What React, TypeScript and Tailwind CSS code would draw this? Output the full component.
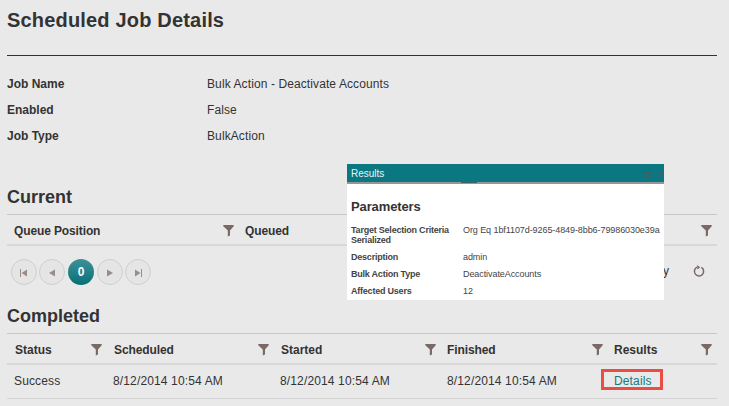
import type { ReactNode } from "react";

function Filter() {
  return (
    <svg className="mt-[3px] h-3 w-[11px] shrink-0" viewBox="0 0 11 12" fill="#7b6965">
      <path d="M0.3 0H10.7V1.3L7 5.5V10.6L4.8 11.6V5.5L0.3 1.3Z" />
    </svg>
  );
}

function Heading({ children }: { children: ReactNode }) {
  return <h2 className="text-[18px] font-bold leading-5">{children}</h2>;
}

function Column({ label, className }: { label?: string; className: string }) {
  return (
    <div className={`flex shrink-0 items-center justify-between ${className}`}>
      <span className="pt-[3px]">{label}</span>
      <Filter />
    </div>
  );
}

function PageButton({ children }: { children: ReactNode }) {
  return (
    <button className="flex size-[26px] items-center justify-center rounded-full border border-[#cfcfcf] bg-[#e5e5e5]">
      <svg className="mt-px size-3" viewBox="0 0 12 12" fill="#998c89">{children}</svg>
    </button>
  );
}

const details = [
  ["Job Name", "Bulk Action - Deactivate Accounts"],
  ["Enabled", "False"],
  ["Job Type", "BulkAction"],
];

function ResultsDialog() {
  return (
    <section className="absolute left-[347px] top-[164px] h-[136px] w-[317px] overflow-hidden bg-white text-[9px] tracking-[-0.08px] text-[#444]">
      <header className="flex h-[18px] items-center bg-[#0b7780] pl-1 text-[10px] tracking-normal text-[#e5f5f6]">
        <span className="w-[292px]">Results</span>
        <svg className="mt-0.5 h-[9px] w-[21px] shrink-0" viewBox="0 0 21 9" fill="none" stroke="#3d5f66">
          <rect x="0.5" y="1.5" width="7" height="5" rx="1" />
          <path d="M.5 2.5h7M15 1l6 6M21 1l-6 6" />
        </svg>
      </header>
      <div className="flex h-[2px] bg-[#969696] pl-[114px]">
        <div className="h-px w-4 bg-[#39666c]" />
      </div>
      <h3 className="mt-[15px] pl-1 text-[13px] font-bold leading-4 tracking-[-0.12px] text-[#333]">Parameters</h3>
      <dl className="mt-[10px] grid grid-cols-[112px_201px] grid-rows-[27px_17px_17px_17px] pl-1 leading-[10px] [&>dt]:whitespace-nowrap [&>dt]:font-bold [&>dt]:tracking-[-0.22px]">
        <dt>Target Selection Criteria<br />Serialized</dt>
        <dd className="whitespace-nowrap">Org Eq 1bf1107d-9265-4849-8bb6-79986030e39a</dd>
        <dt>Description</dt><dd>admin</dd>
        <dt>Bulk Action Type</dt><dd>DeactivateAccounts</dd>
        <dt>Affected Users</dt><dd>12</dd>
      </dl>
    </section>
  );
}

export default function App() {
  return (
    <main className="relative h-[406px] w-[729px] overflow-hidden bg-[#e9e9e9] pl-[7px] pr-3 font-['Liberation_Sans',Arial,sans-serif] text-[12px] text-[#333]">
      <h1 className="h-14 border-b border-[#333] pt-[9px] text-[20px] font-bold leading-[22px] tracking-[0.18px]">Scheduled Job Details</h1>
      <dl className="mt-[15px]">
        {details.map(([name, value]) => (
          <div key={name} className="flex h-[26px] items-center">
            <dt className="w-[200px] font-bold">{name}</dt>
            <dd className="tracking-[0.1px]">{value}</dd>
          </div>
        ))}
      </dl>
      <div className="pt-[38px]"><Heading>Current</Heading></div>
      <div className="mt-[7px] flex h-8 border-b-2 border-t border-b-[#d8d8d8] border-t-[#c8c8c8] font-bold tracking-[-0.12px]">
        <Column label="Queue Position" className="w-[237px] pl-[7px] pr-[10px]" />
        <Column label="Queued" className="w-[236px] pl-px pr-[10px]" />
        <Column className="w-[237px] pl-px pr-[5px]" />
      </div>
      <div className="mt-[13px] flex h-[26px] items-center justify-between pl-1 pr-3">
        <nav className="flex">
          <div className="flex gap-0.5">
            <PageButton><path d="M2 2h1v8H2zM9 2.5v7L3.5 6z" /></PageButton>
            <PageButton><path d="M9 2.5v7L3 6z" /></PageButton>
          </div>
          <span className="mx-[3px] flex size-[26px] items-center justify-center rounded-full bg-linear-to-b from-[#3b9198] to-[#007078] text-[12px] font-bold text-white">0</span>
          <div className="flex gap-0.5">
            <PageButton><path d="M3 2.5v7l6-3.5z" /></PageButton>
            <PageButton><path d="M3 2.5v7L8.5 6zM9 2h1v8H9z" /></PageButton>
          </div>
        </nav>
        <div className="flex items-center pb-0.5">
          <span className="mr-6">No items to display</span>
          <svg className="size-3" viewBox="0 0 12 12" fill="none" stroke="#7b6965" strokeWidth="1.5">
            <path d="M8.4 2.4A4.6 4.6 0 1 1 4 2.2" />
            <path d="M4 0L7.2 2.2L4.5 4.6Z" fill="#7b6965" stroke="none" />
          </svg>
        </div>
      </div>
      <div className="pt-[21px]"><Heading>Completed</Heading></div>
      <div className="mt-[7px] flex h-8 border-b-2 border-t border-b-[#d8d8d8] border-t-[#c8c8c8] font-bold">
        <Column label="Status" className="w-[105px] pl-2 pr-[10px]" />
        <Column label="Scheduled" className="w-[167px] pl-[2px] pr-[10px] tracking-[-0.1px]" />
        <Column label="Started" className="w-[167px] pl-[2px] pr-[10px]" />
        <Column label="Finished" className="w-[167px] pl-px pr-[10px] tracking-[-0.1px]" />
        <Column label="Results" className="w-[104px] pl-px pr-[5px]" />
      </div>
      <div className="flex h-[34px] items-center border-b border-[#d5d5d5] pb-1 tracking-[0.14px]">
        <span className="w-[106px] pl-[7px] pt-0.5">Success</span>
        <span className="w-[167px] pt-0.5">8/12/2014 10:54 AM</span>
        <span className="w-[167px] pt-0.5">8/12/2014 10:54 AM</span>
        <span className="w-[154px] pt-0.5">8/12/2014 10:54 AM</span>
        <a className="mb-px flex h-[21px] w-[62px] items-center border-[3px] border-[#eb4c45] pl-[10px] pt-[3px] text-[#147880]">Details</a>
      </div>
      <ResultsDialog />
    </main>
  );
}
